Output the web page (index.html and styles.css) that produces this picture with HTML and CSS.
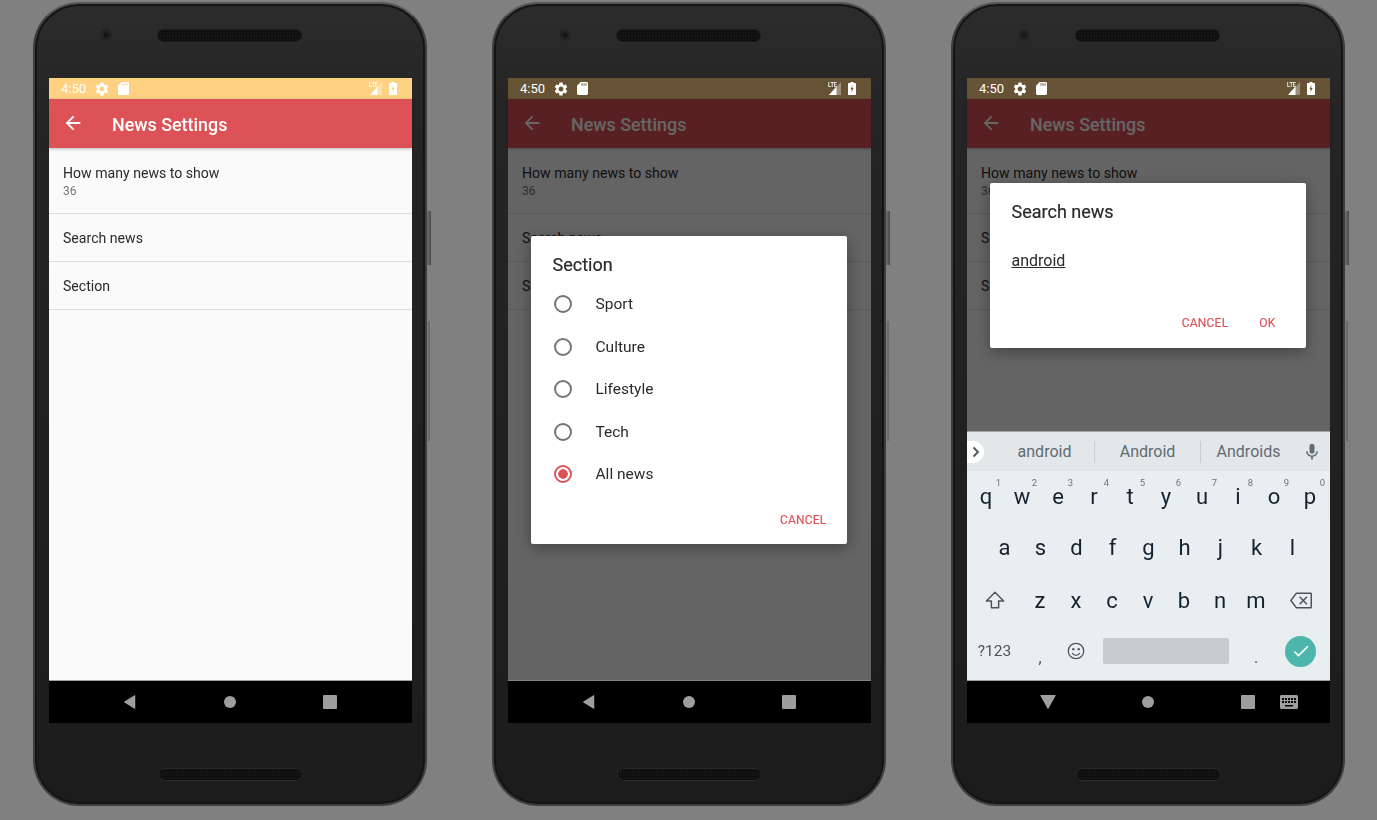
FILE: index.html
```html
<!DOCTYPE html>
<html lang="en">
<head>
    <meta charset="UTF-8">
    <meta name="viewport" content="width=device-width, initial-scale=1.0">
    <title>News Settings</title>
    <link rel="stylesheet" href="styles.css">
</head>

<body>
  <svg class="sprites" width="0" height="0">
    <symbol id="gear" viewBox="0 0 24 24"><path d="M19.14 12.94c.04-.3.06-.61.06-.94 0-.32-.02-.64-.07-.94l2.03-1.58c.18-.14.23-.41.12-.61l-1.92-3.32c-.12-.22-.37-.29-.59-.22l-2.39.96c-.5-.38-1.03-.7-1.62-.94l-.36-2.54c-.04-.24-.24-.41-.48-.41h-3.84c-.24 0-.43.17-.47.41l-.36 2.54c-.59.24-1.13.57-1.62.94l-2.39-.96c-.22-.08-.47 0-.59.22L2.74 8.87c-.12.21-.08.47.12.61l2.03 1.58c-.05.3-.09.63-.09.94s.02.64.07.94l-2.03 1.58c-.18.14-.23.41-.12.61l1.92 3.32c.12.22.37.29.59.22l2.39-.96c.5.38 1.03.7 1.62.94l.36 2.54c.05.24.24.41.48.41h3.84c.24 0 .44-.17.47-.41l.36-2.54c.59-.24 1.13-.56 1.62-.94l2.39.96c.22.08.47 0 .59-.22l1.92-3.32c.12-.22.07-.47-.12-.61l-2.01-1.58zM12 15.6c-1.98 0-3.6-1.62-3.6-3.6s1.62-3.6 3.6-3.6 3.6 1.62 3.6 3.6-1.62 3.6-3.6 3.6z"/></symbol>
    <symbol id="sd" viewBox="0 0 12 14"><path fill-rule="evenodd" d="M4 0h6.500c.8 0 1.500.7 1.500 1.500v11c0 .8-.7 1.500-1.500 1.500h-9C.7 14 0 13.300 0 12.500V4zM5 1.200V4h1V1.200zM7.200 1.200V4h1V1.200zM9.400 1.200V4h1V1.200z"/></symbol>
    <symbol id="signal" viewBox="0 0 12 13"><path d="M12 0v13H0z" opacity=".35"/><path d="M7.500 4.500V13H0z"/></symbol>
    <symbol id="battery" viewBox="0 0 8 13"><path fill-rule="evenodd" d="M2.500 0h3v1H7c.6 0 1 .4 1 1v10c0 .6-.4 1-1 1H1c-.6 0-1-.4-1-1V2c0-.6.4-1 1-1h1.500zM4.600 3 2.500 7.300h1.300L3.400 10.500 5.600 6H4.200z"/></symbol>
    <symbol id="back" viewBox="0 0 24 24"><path d="M20 11H7.830l5.590-5.590L12 4l-8 8 8 8 1.410-1.410L7.830 13H20z"/></symbol>
    <symbol id="nav-back" viewBox="0 0 14 16"><path d="M13 .6v14.800c0 .5-.4.700-.8.400L.6 8.500c-.4-.3-.4-.7 0-1L12.200.2c.4-.3.8-.1.8.4z"/></symbol>
    <symbol id="nav-down" viewBox="0 0 16 14"><path d="M.4.800C.3.300.5 0 1 0h14c.5 0 .7.300.6.800L8.500 13.600c-.3.400-.7.400-1 0z"/></symbol>
    <symbol id="nav-keyboard" viewBox="0 0 18 14"><path fill-rule="evenodd" d="M1.500 0h15c.8 0 1.500.7 1.500 1.500v11c0 .8-.7 1.500-1.500 1.500h-15C.7 14 0 13.300 0 12.500v-11C0 .7.700 0 1.500 0zM2 3v2h2V3zm3 0v2h2V3zm3 0v2h2V3zm3 0v2h2V3zm3 0v2h2V3zM2 6v2h2V6zm3 0v2h2V6zm3 0v2h2V6zm3 0v2h2V6zm3 0v2h2V6zM5 10v1.500h8V10z"/></symbol>
    <symbol id="mic" viewBox="0 0 24 24"><path d="M12 14c1.660 0 3-1.340 3-3V5c0-1.660-1.340-3-3-3S9 3.340 9 5v6c0 1.660 1.340 3 3 3zm5.300-3c0 3-2.540 5.100-5.300 5.100S6.700 14 6.700 11H5c0 3.410 2.720 6.230 6 6.720V21h2v-3.280c3.280-.48 6-3.300 6-6.720z"/></symbol>
    <symbol id="shift" viewBox="0 0 22 20"><path fill="none" stroke="currentColor" stroke-width="1.600" stroke-linejoin="round" d="M11 1.500 1.500 11H7v7.500h8V11h5.500z"/></symbol>
    <symbol id="delete" viewBox="0 0 24 18"><path fill="none" stroke="currentColor" stroke-width="1.600" stroke-linejoin="round" d="M7 1h15.500c.4 0 .7.300.7.700v14.600c0 .4-.3.700-.7.700H7L1 9z"/><path fill="none" stroke="currentColor" stroke-width="1.600" d="m10.500 5 8 8m0-8-8 8"/></symbol>
    <symbol id="emoji" viewBox="0 0 20 20"><circle cx="10" cy="10" r="8.600" fill="none" stroke="currentColor" stroke-width="1.400"/><circle cx="7" cy="8" r="1.300" fill="currentColor"/><circle cx="13" cy="8" r="1.300" fill="currentColor"/><path fill="none" stroke="currentColor" stroke-width="1.400" d="M5.800 12.200c1 1.900 2.500 2.600 4.200 2.600s3.200-.7 4.200-2.600"/></symbol>
    <symbol id="check" viewBox="0 0 24 24"><path d="M9 16.170 4.830 12l-1.420 1.410L9 19 21 7l-1.410-1.410z"/></symbol>
  </svg>

  <div class="stage">

    <!-- settings list -->
    <div class="phone">
      <div class="top-bezel"><i class="camera"></i><i class="speaker"></i></div>
      <div class="screen">
        <div class="status">
          <span class="time">4:50</span>
          <svg class="ic-gear"><use href="#gear"/></svg>
          <svg class="ic-sd"><use href="#sd"/></svg>
          <span class="spacer"></span>
          <span class="lte">LTE</span>
          <svg class="ic-signal"><use href="#signal"/></svg>
          <svg class="ic-battery"><use href="#battery"/></svg>
        </div>
        <div class="app">
          <div class="toolbar">
            <svg class="ic-back"><use href="#back"/></svg>
            <span class="toolbar-title">News Settings</span>
          </div>
          <div class="pref pref-tall"><span class="pref-title">How many news to show</span><span class="pref-value">36</span></div>
          <div class="pref"><span class="pref-title">Search news</span></div>
          <div class="pref"><span class="pref-title">Section</span></div>
        </div>
        <div class="nav">
          <svg class="nav-slot nav-tri"><use href="#nav-back"/></svg>
          <i class="nav-slot nav-dot"></i>
          <i class="nav-slot nav-square"></i>
        </div>
      </div>
      <div class="bottom-bezel"><i class="speaker"></i></div>
      <i class="side-btn side-power"></i><i class="side-btn side-volume"></i>
    </div>

    <!-- section dialog -->
    <div class="phone">
      <div class="top-bezel"><i class="camera"></i><i class="speaker"></i></div>
      <div class="screen">
        <div class="status status-dim">
          <span class="time">4:50</span>
          <svg class="ic-gear"><use href="#gear"/></svg>
          <svg class="ic-sd"><use href="#sd"/></svg>
          <span class="spacer"></span>
          <span class="lte">LTE</span>
          <svg class="ic-signal"><use href="#signal"/></svg>
          <svg class="ic-battery"><use href="#battery"/></svg>
        </div>
        <div class="app">
          <div class="toolbar">
            <svg class="ic-back"><use href="#back"/></svg>
            <span class="toolbar-title">News Settings</span>
          </div>
          <div class="pref pref-tall"><span class="pref-title">How many news to show</span><span class="pref-value">36</span></div>
          <div class="pref"><span class="pref-title">Search news</span></div>
          <div class="pref"><span class="pref-title">Section</span></div>
          <div class="scrim">
            <div class="scrim-center">
              <div class="dialog dialog-section">
                <div class="dialog-title">Section</div>
                <ul class="radios">
                  <li><i class="radio"></i>Sport</li>
                  <li><i class="radio"></i>Culture</li>
                  <li><i class="radio"></i>Lifestyle</li>
                  <li><i class="radio"></i>Tech</li>
                  <li><i class="radio radio-on"></i>All news</li>
                </ul>
                <div class="dialog-actions"><span>CANCEL</span></div>
              </div>
            </div>
          </div>
        </div>
        <div class="nav">
          <svg class="nav-slot nav-tri"><use href="#nav-back"/></svg>
          <i class="nav-slot nav-dot"></i>
          <i class="nav-slot nav-square"></i>
        </div>
      </div>
      <div class="bottom-bezel"><i class="speaker"></i></div>
      <i class="side-btn side-power"></i><i class="side-btn side-volume"></i>
    </div>

    <!-- search dialog + keyboard -->
    <div class="phone">
      <div class="top-bezel"><i class="camera"></i><i class="speaker"></i></div>
      <div class="screen">
        <div class="status status-dim">
          <span class="time">4:50</span>
          <svg class="ic-gear"><use href="#gear"/></svg>
          <svg class="ic-sd"><use href="#sd"/></svg>
          <span class="spacer"></span>
          <span class="lte">LTE</span>
          <svg class="ic-signal"><use href="#signal"/></svg>
          <svg class="ic-battery"><use href="#battery"/></svg>
        </div>
        <div class="app">
          <div class="toolbar">
            <svg class="ic-back"><use href="#back"/></svg>
            <span class="toolbar-title">News Settings</span>
          </div>
          <div class="pref pref-tall"><span class="pref-title">How many news to show</span><span class="pref-value">36</span></div>
          <div class="pref"><span class="pref-title">Search news</span></div>
          <div class="pref"><span class="pref-title">Section</span></div>
          <div class="scrim">
            <div class="scrim-center">
              <div class="dialog dialog-search">
                <div class="dialog-title">Search news</div>
                <div class="dialog-input"><u>android</u></div>
                <div class="dialog-actions"><span>CANCEL</span><span>OK</span></div>
              </div>
            </div>
            <div class="keyboard">
              <div class="suggest">
                <span class="suggest-toggle"><svg width="8" height="12" viewBox="0 0 8 12"><path d="M1.500 1.500 6 6l-4.500 4.500" fill="none" stroke="#4a5459" stroke-width="1.800"/></svg></span>
                <span class="suggest-word">android</span>
                <span class="suggest-word">Android</span>
                <span class="suggest-word">Androids</span>
                <svg class="ic-mic"><use href="#mic"/></svg>
              </div>
              <div class="key-row key-row-top">
                <span class="key" data-n="1">q</span><span class="key" data-n="2">w</span><span class="key" data-n="3">e</span><span class="key" data-n="4">r</span><span class="key" data-n="5">t</span><span class="key" data-n="6">y</span><span class="key" data-n="7">u</span><span class="key" data-n="8">i</span><span class="key" data-n="9">o</span><span class="key" data-n="0">p</span>
              </div>
              <div class="key-row key-row-center">
                <span class="key">a</span><span class="key">s</span><span class="key">d</span><span class="key">f</span><span class="key">g</span><span class="key">h</span><span class="key">j</span><span class="key">k</span><span class="key">l</span>
              </div>
              <div class="key-row">
                <span class="key key-wide"><svg class="ic-shift"><use href="#shift"/></svg></span>
                <span class="key">z</span><span class="key">x</span><span class="key">c</span><span class="key">v</span><span class="key">b</span><span class="key">n</span><span class="key">m</span>
                <span class="key key-wide"><svg class="ic-delete"><use href="#delete"/></svg></span>
              </div>
              <div class="key-row key-row-last">
                <span class="key key-wide key-sym">?123</span>
                <span class="key key-punct">,</span>
                <span class="key"><svg class="ic-emoji"><use href="#emoji"/></svg></span>
                <span class="key-space-wrap"><i class="key-space"></i></span>
                <span class="key key-punct key-period">.</span>
                <span class="key key-wide"><span class="key-enter"><svg class="ic-check"><use href="#check"/></svg></span></span>
              </div>
            </div>
          </div>
        </div>
        <div class="nav nav-ime">
          <svg class="nav-slot nav-tri-down"><use href="#nav-down"/></svg>
          <i class="nav-slot nav-dot"></i>
          <i class="nav-slot nav-square"></i>
          <svg class="nav-kbd"><use href="#nav-keyboard"/></svg>
        </div>
      </div>
      <div class="bottom-bezel"><i class="speaker"></i></div>
      <i class="side-btn side-power"></i><i class="side-btn side-volume"></i>
    </div>

  </div>
</body>
</html>
```

FILE: styles.css
```css
* { box-sizing: border-box; }
body { margin: 0; height: 820px; overflow: hidden; background: #808080; font-family: Roboto, "Liberation Sans", sans-serif; }
i { display: block; }

.sprites { position: absolute; }

.stage { display: flex; gap: 65px; padding: 2px 0 0 33px; }

/* phone body */
.phone { position: relative; width: 394px; height: 804px; padding: 0 13px 0 14px; display: flex; flex-direction: column; border: 2px solid #3e3e3e; border-top-color: #565656; border-radius: 46px; background: linear-gradient(#2c2c2c 0, #252525 12%, #1c1c1c 100%); box-shadow: inset 0 0 0 2px #141414; filter: blur(.35px); }
.top-bezel { position: relative; height: 74px; flex: none; }
.bottom-bezel { flex: 1; display: flex; justify-content: center; padding-top: 45px; }
.camera { position: absolute; left: 50px; top: 24px; width: 14px; height: 14px; border-radius: 50%; background: radial-gradient(circle, #17131f 0 2px, #222 3px 7px); border: 1px solid #2e2e2e; }
.speaker { width: 145px; height: 13px; border-radius: 7px; background-color: #141414; background-image: radial-gradient(#0a0a0a 45%, transparent 50%); background-size: 3px 3px; border: 1px solid #1b1b1b; }
.top-bezel .speaker { position: absolute; left: 108px; top: 25px; }
.bottom-bezel .speaker { border-color: #2a2a2a; }
.side-btn { position: absolute; }
.side-power { right: -6px; top: 207px; width: 4px; height: 54px; background: linear-gradient(90deg, #6f6f6f, #4a4a4a); }
.side-volume { right: -5px; top: 317px; width: 2px; height: 120px; background: #6a6a6a; }

.screen { flex: none; height: 645px; display: flex; flex-direction: column; background: #fafafa; }

/* status bar */
.status { flex: none; height: 21px; display: flex; align-items: center; padding: 0 15px 0 12px; background: #ffd183; color: #fff; fill: #fff; }
.status-dim { background: #665335; }
.time { font-size: 13px; width: 24px; margin-right: 9px; }
.ic-gear { width: 16px; height: 16px; margin-right: 8px; }
.ic-sd { width: 11px; height: 13px; }
.spacer { flex: 1; }
.lte { font-size: 7px; line-height: 7px; align-self: flex-start; margin-top: 4px; margin-right: -9px; position: relative; z-index: 1; font-weight: 500; transform: scaleX(.8); }
.ic-signal { width: 12px; height: 13px; }
.ic-battery { width: 8px; height: 13px; margin-left: 7px; }

/* app content */
.app { position: relative; flex: 1; }
.toolbar { height: 49px; display: flex; align-items: center; padding-left: 13px; background: #dd5256; color: #fff; fill: #fff; box-shadow: 0 1px 3px rgba(0,0,0,.25); }
.ic-back { width: 22px; height: 22px; margin-right: 28px; margin-top: -1px; }
.toolbar-title { font-size: 17.9px; font-weight: 500; margin-top: 1px; }
.pref { height: 48px; padding: 0 14px; display: flex; flex-direction: column; justify-content: center; border-bottom: 1px solid #dedede; color: #2b2b2b; }
.pref-tall { height: 66px; padding-top: 2px; }
.pref-title { font-size: 14.1px; }
.pref-value { font-size: 12px; color: #757575; margin-top: 3px; }

.scrim { position: absolute; inset: 0; display: flex; flex-direction: column; background: rgba(0,0,0,.6); }
.scrim-center { flex: 1; display: flex; align-items: center; justify-content: center; padding-right: 2px; }

/* dialogs */
.dialog { width: 316px; background: #fff; border-radius: 2px; box-shadow: 0 4px 16px rgba(0,0,0,.35); color: #2b2b2b; }
.dialog-title { font-size: 18px; font-weight: 400; -webkit-text-stroke: .2px #2b2b2b; padding: 18px 22px 0; line-height: 21px; }
.radios { list-style: none; margin: 8px 0 0; padding: 0 0 0 23px; }
.radios li { height: 42.5px; display: flex; align-items: center; gap: 24px; font-size: 15.5px; }
.radio { width: 18px; height: 18px; border: 2px solid #757575; border-radius: 50%; }
.radio-on { border-color: #dd5256; background: radial-gradient(circle, #dd5256 0 4.5px, transparent 5px); }
.dialog-actions { display: flex; justify-content: flex-end; gap: 31px; padding: 26px 30px 18px; font-size: 12px; line-height: 14px; color: #dd5256; letter-spacing: .2px; -webkit-text-stroke: .15px #dd5256; }
.dialog-section .dialog-actions { padding: 17px 20px 17.5px; }
.dialog-input { padding: 30px 22px 0; font-size: 16px; line-height: 18px; height: 68px; }

/* keyboard */
.keyboard { flex: none; height: 250px; display: flex; flex-direction: column; background: #e9eef1; color: #14232c; border-top: 1px solid #9ea3a6; }
.suggest { flex: none; height: 39px; display: flex; align-items: center; background: #e3e7e9; position: relative; padding-left: 28px; color: #616b72; fill: #616b72; font-size: 16px; }
.suggest-toggle { position: absolute; left: 0; top: 9px; width: 17px; height: 22px; background: #fff; border-radius: 0 11px 11px 0; display: flex; align-items: center; justify-content: center; }
.suggest-word { width: 100px; height: 22px; line-height: 22px; text-align: center; border-right: 1px solid #c8cdd0; }
.suggest-word:nth-of-type(3) { width: 106px; }
.suggest-word:nth-of-type(4) { width: 95px; border-right: none; }
.ic-mic { width: 20px; height: 20px; margin-left: 6px; }
.key-row { flex: none; height: 52px; display: flex; }
.key-row-top { height: 50px; padding-left: 1px; }
.key-row-center { justify-content: center; height: 53px; }
.key-row-last { height: 50px; }
.key { position: relative; width: 36px; height: 100%; flex: none; display: flex; align-items: center; justify-content: center; font-size: 22px; }
.key[data-n]::after { content: attr(data-n); position: absolute; top: 6px; right: 3px; font-size: 9.5px; color: #6e767b; }
.key-wide { width: 55px; }
.key-wide:last-child { width: 53px; }
.key-row-last .key-wide:last-child { padding-right: 6px; }
.key-sym { font-size: 15.5px; color: #4a5459; }
.key-punct { font-size: 16px; padding-top: 12px; color: #4a5459; }
.key-period { padding-right: 6px; }
.key-space-wrap { flex: 1; display: flex; align-items: center; padding: 0 12px 0 9px; }
.key-space { width: 100%; height: 26px; background: #c7ccce; border-radius: 2px; }
.key-enter { width: 31px; height: 31px; flex: none; border-radius: 50%; background: #4db6ac; display: flex; align-items: center; justify-content: center; fill: #fff; }
.ic-shift { width: 20px; height: 20px; color: #4a5459; }
.ic-delete { width: 22px; height: 17px; color: #4a5459; }
.ic-emoji { width: 18px; height: 18px; color: #4a5459; }
.ic-check { width: 20px; height: 20px; }

/* nav bar */
.nav { position: relative; flex: none; height: 42px; display: flex; align-items: center; padding-left: 31px; background: #000; box-shadow: 0 -1px 0 rgba(140,140,140,.8); }
.nav-slot { flex: none; width: 100px; height: 14px; fill: #9e9e9e; }
.nav-dot::after, .nav-square::after { content: ""; display: block; margin: 0 auto; background: #9e9e9e; }
.nav-dot::after { width: 12px; height: 12px; margin-top: 1px; border-radius: 50%; }
.nav-square::after { width: 14px; height: 14px; border-radius: 1px; }
.nav-kbd { width: 18px; height: 14px; margin-left: -18px; fill: #9e9e9e; }
```
